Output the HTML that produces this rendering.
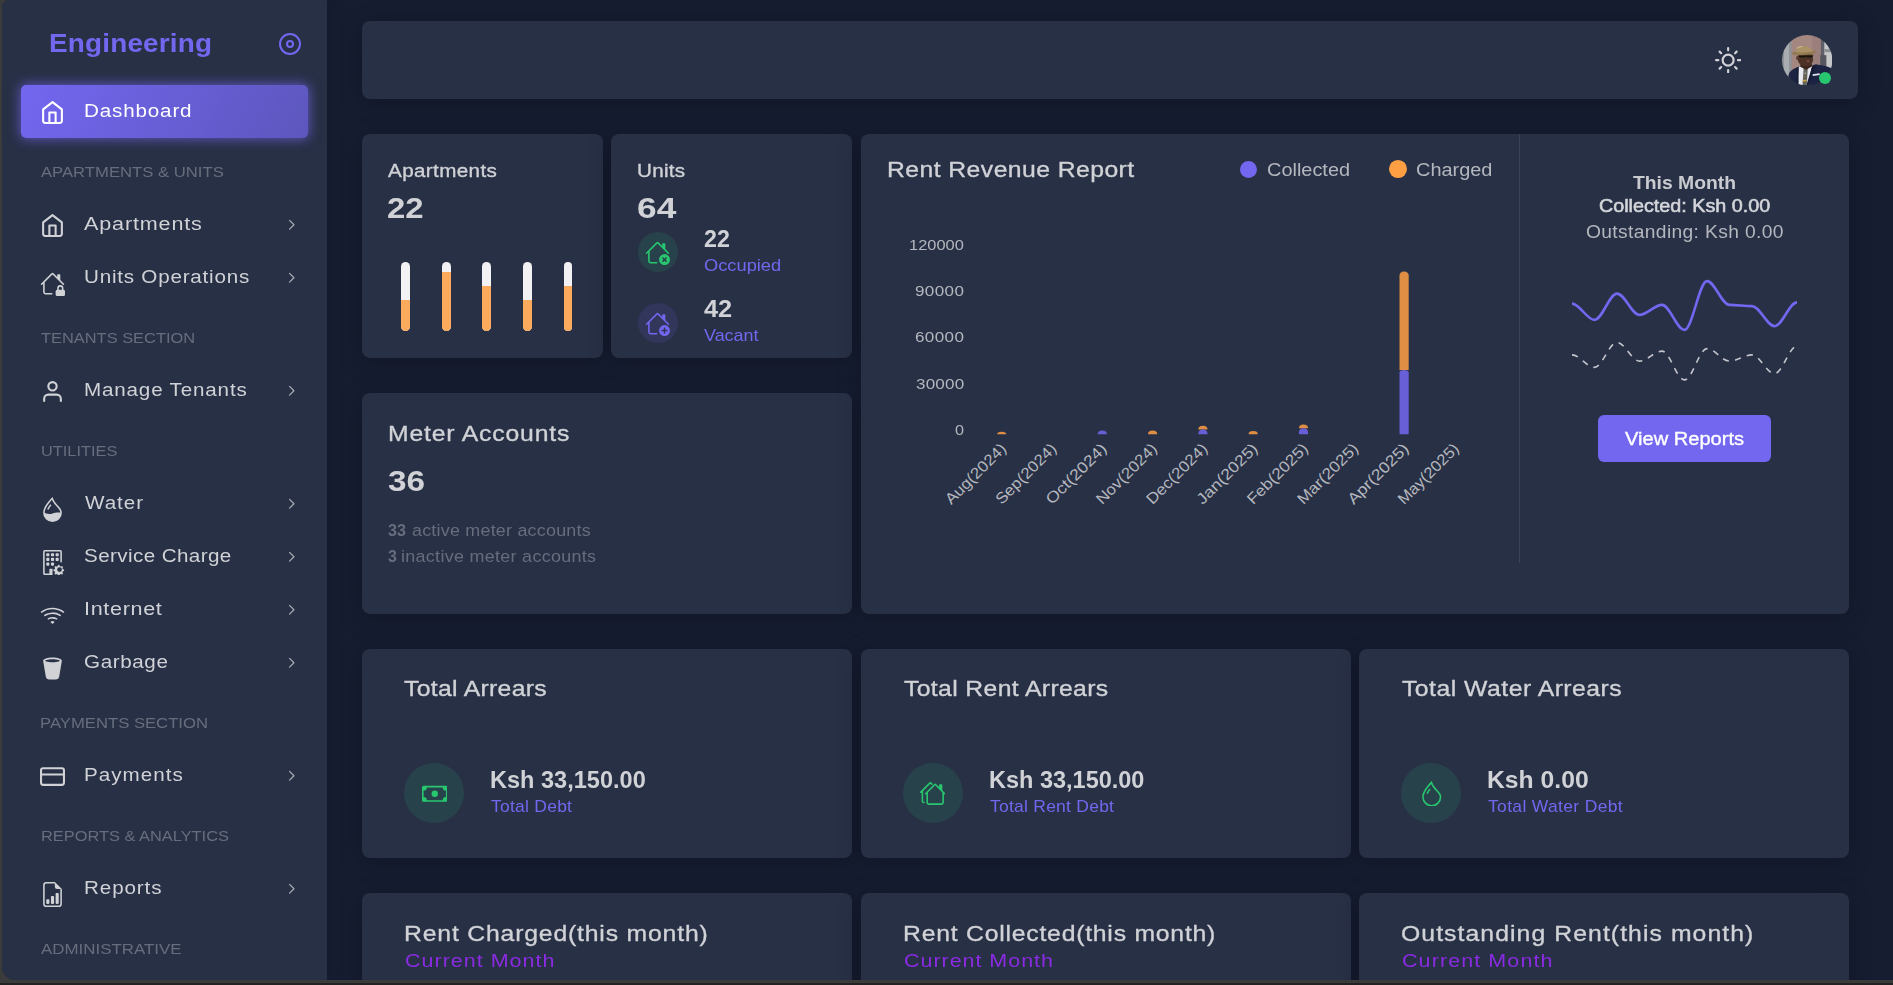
<!DOCTYPE html>
<html lang="en">
<head>
<meta charset="utf-8">
<title>Engineering - Dashboard</title>
<style>
*{box-sizing:border-box;margin:0;padding:0}
html,body{width:1893px;height:985px;overflow:hidden;background:#3b3b3b}
body{font-family:"Liberation Sans",sans-serif;color:#d0d2d6;position:relative}
.frame-bottom{position:absolute;left:0;top:983px;width:1893px;height:2px;background:#222}
.app{position:absolute;left:2px;top:0;width:1891px;height:980px;background:linear-gradient(90deg,#283046 0,#283046 40px,#161d31 41px);overflow:hidden;border-radius:7px 0 0 13px}
.abs{position:absolute}
/* ---------- sidebar ---------- */
.sidebar{position:absolute;left:0;top:0;width:325px;height:980px;background:#283046;border-radius:7px 0 0 13px;box-shadow:0 0 15px 0 rgba(16,20,34,.35)}
.brand{position:absolute;left:46px;top:27px;font-size:25.4px;font-weight:700;color:#7367f0;line-height:32px;white-space:nowrap}
.toggle{position:absolute;left:276px;top:32px;width:24px;height:24px}
.nav-item{position:absolute;left:19px;width:287px;height:53px;border-radius:5px;color:#d0d2d6;font-size:18.75px;white-space:nowrap}
.nav-item.active{background:linear-gradient(118deg,#7367f0,rgba(115,103,240,.7));box-shadow:0 0 12px 1px rgba(115,103,240,.7);color:#fff}
.nav-item .ic{position:absolute;left:18.7px;top:15px;width:25px;height:25px}
.nav-item .ic.bi{top:20px;fill:currentColor}
.nav-item .tx{position:absolute;left:63px;top:12px;line-height:27px;display:block}
.nav-item .chev{position:absolute;left:262.1px;top:17.9px;width:17.5px;height:17.5px;stroke-width:1.7;color:#a9acb3}
.nav-head{position:absolute;left:39px;font-size:15.4px;color:#676d7d;text-transform:uppercase;line-height:24px;white-space:nowrap}
svg.f{fill:none;stroke:currentColor;stroke-width:2;stroke-linecap:round;stroke-linejoin:round}
/* ---------- main ---------- */
.navbar{position:absolute;left:360px;top:21px;width:1496px;height:78px;background:#283046;border-radius:8px;box-shadow:0 4px 24px 0 rgba(0,0,0,.24)}
.card{position:absolute;background:#283046;border-radius:8px;box-shadow:0 4px 24px 0 rgba(0,0,0,.24)}
.t{position:absolute;white-space:nowrap}
.pg{position:absolute;left:-2px;top:0;width:1893px;height:985px}
.vbar{position:absolute;border-radius:5px;background:#f2f2f4;overflow:hidden}
.vbar i{position:absolute;left:0;right:0;bottom:0;background:#fcaa5c}
/*FIT-START*/
#brand{letter-spacing:0.152px;margin-left:0.60px;transform:scaleX(1.1000);transform-origin:0 50%}
#n0{letter-spacing:0.758px;margin-left:-0.20px;transform:scaleX(1.1000);transform-origin:0 50%}
#h1{letter-spacing:0.000px;margin-left:-0.20px;transform:scaleX(1.0832);transform-origin:0 50%}
#n1{letter-spacing:0.732px;margin-left:0.20px;transform:scaleX(1.1500);transform-origin:0 50%}
#n2{letter-spacing:0.703px;margin-left:-0.40px;transform:scaleX(1.1000);transform-origin:0 50%}
#h2{letter-spacing:0.000px;margin-left:-0.20px;transform:scaleX(1.0663);transform-origin:0 50%}
#n3{letter-spacing:0.742px;margin-left:-0.40px;transform:scaleX(1.1000);transform-origin:0 50%}
#h3{letter-spacing:0.000px;margin-left:-0.26px;transform:scaleX(1.0628);transform-origin:0 50%}
#n4{letter-spacing:0.870px;margin-left:0.70px;transform:scaleX(1.1000);transform-origin:0 50%}
#n5{letter-spacing:0.358px;margin-left:0.20px;transform:scaleX(1.1000);transform-origin:0 50%}
#n6{letter-spacing:0.586px;margin-left:-0.45px;transform:scaleX(1.1500);transform-origin:0 50%}
#n7{letter-spacing:0.546px;margin-left:0.20px;transform:scaleX(1.1000);transform-origin:0 50%}
#h4{letter-spacing:0.000px;margin-left:-0.58px;transform:scaleX(1.0834);transform-origin:0 50%}
#n8{letter-spacing:0.923px;margin-left:-0.30px;transform:scaleX(1.1000);transform-origin:0 50%}
#h5{letter-spacing:0.000px;margin-left:-0.46px;transform:scaleX(1.0650);transform-origin:0 50%}
#h6{letter-spacing:0.000px;margin-left:0.00px;transform:scaleX(1.0978);transform-origin:0 50%}
#n9{letter-spacing:0.802px;margin-left:-0.30px;transform:scaleX(1.1000);transform-origin:0 50%}
#c1a{letter-spacing:0.338px;margin-left:0.01px;transform:scaleX(1.1000);transform-origin:0 50%}
#c1b{letter-spacing:0.000px;margin-left:-1.09px;transform:scaleX(1.0983);transform-origin:0 50%}
#c2a{letter-spacing:0.232px;margin-left:-1.09px;transform:scaleX(1.1000);transform-origin:0 50%}
#c2b{letter-spacing:0.000px;margin-left:-1.17px;transform:scaleX(1.1779);transform-origin:0 50%}
#c2c{letter-spacing:0.000px;margin-left:0.01px;transform:scaleX(0.9920);transform-origin:0 50%}
#c2d{letter-spacing:0.000px;margin-left:0.01px;transform:scaleX(1.0748);transform-origin:0 50%}
#c2e{letter-spacing:0.000px;margin-left:0.01px;transform:scaleX(1.0843);transform-origin:0 50%}
#c2f{letter-spacing:0.000px;margin-left:0.01px;transform:scaleX(1.0550);transform-origin:0 50%}
#c3a{letter-spacing:0.750px;margin-left:-1.09px;transform:scaleX(1.1000);transform-origin:0 50%}
#c3b{letter-spacing:0.000px;margin-left:0.01px;transform:scaleX(1.1106);transform-origin:0 50%}
#c3c1{letter-spacing:0.000px;margin-left:0.01px;transform:scaleX(0.9914);transform-origin:0 50%}
#c3c2{letter-spacing:0.203px;margin-left:0.00px;transform:scaleX(1.1000);transform-origin:0 50%}
#c3d1{letter-spacing:0.000px;margin-left:0.01px;transform:scaleX(0.9778);transform-origin:0 50%}
#c3d2{letter-spacing:0.282px;margin-left:-1.09px;transform:scaleX(1.1000);transform-origin:0 50%}
#r1{letter-spacing:0.393px;margin-left:-1.09px;transform:scaleX(1.1000);transform-origin:0 50%}
#r2{letter-spacing:0.000px;margin-left:0.00px;transform:scaleX(1.0625);transform-origin:0 50%}
#r3{letter-spacing:0.000px;margin-left:0.00px;transform:scaleX(1.0630);transform-origin:0 50%}
#y0{letter-spacing:0.000px;margin-left:-1.05px;transform:scaleX(1.0587);transform-origin:0 50%}
#y1{letter-spacing:0.334px;margin-left:0.00px;transform:scaleX(1.1000);transform-origin:0 50%}
#y2{letter-spacing:0.334px;margin-left:0.00px;transform:scaleX(1.1000);transform-origin:0 50%}
#y3{letter-spacing:0.175px;margin-left:0.01px;transform:scaleX(1.1000);transform-origin:0 50%}
#y4{letter-spacing:0.000px;margin-left:0.01px;transform:scaleX(1.0444);transform-origin:0 50%}
#p1{letter-spacing:0.000px;margin-left:0.01px;transform:scaleX(1.0739);transform-origin:0 50%}
#p2{letter-spacing:0.000px;margin-left:0.00px;transform:scaleX(1.0962);transform-origin:0 50%}
#p3{letter-spacing:0.314px;margin-left:0.01px;transform:scaleX(1.1000);transform-origin:0 50%}
#p4{letter-spacing:0.000px;margin-left:0.01px;transform:scaleX(1.0714);transform-origin:0 50%}
#a1{letter-spacing:0.286px;margin-left:0.01px;transform:scaleX(1.1000);transform-origin:0 50%}
#a2{letter-spacing:0.000px;margin-left:-1.02px;transform:scaleX(1.0151);transform-origin:0 50%}
#a3{letter-spacing:0.228px;margin-left:0.00px;transform:scaleX(1.1000);transform-origin:0 50%}
#b1{letter-spacing:0.328px;margin-left:0.00px;transform:scaleX(1.1000);transform-origin:0 50%}
#b2{letter-spacing:0.000px;margin-left:-1.01px;transform:scaleX(1.0132);transform-origin:0 50%}
#b3{letter-spacing:0.226px;margin-left:0.00px;transform:scaleX(1.1000);transform-origin:0 50%}
#w1{letter-spacing:0.445px;margin-left:0.01px;transform:scaleX(1.1000);transform-origin:0 50%}
#w2{letter-spacing:0.000px;margin-left:-1.06px;transform:scaleX(1.0655);transform-origin:0 50%}
#w3{letter-spacing:0.311px;margin-left:0.01px;transform:scaleX(1.1000);transform-origin:0 50%}
#d1{letter-spacing:0.750px;margin-left:-1.09px;transform:scaleX(1.1000);transform-origin:0 50%}
#d2{letter-spacing:0.869px;margin-left:0.01px;transform:scaleX(1.1500);transform-origin:0 50%}
#e1{letter-spacing:0.703px;margin-left:-1.10px;transform:scaleX(1.1000);transform-origin:0 50%}
#e2{letter-spacing:0.840px;margin-left:0.00px;transform:scaleX(1.1500);transform-origin:0 50%}
#f1{letter-spacing:0.978px;margin-left:-1.09px;transform:scaleX(1.1000);transform-origin:0 50%}
#f2{letter-spacing:0.949px;margin-left:0.01px;transform:scaleX(1.1500);transform-origin:0 50%}
/*FIT-END*/
</style>
</head>
<body>
<div class="frame-bottom"></div>
<div class="app">

<!-- SIDEBAR -->
<div class="sidebar">
  <div class="brand" id="brand">Engineering</div>
  <svg class="toggle f" viewBox="0 0 24 24" style="color:#7367f0"><circle cx="12" cy="12" r="10"/><circle cx="12" cy="12" r="3"/></svg>

  <div class="nav-item active" style="top:85px">
    <svg class="ic f" viewBox="0 0 24 24"><path d="M3 9l9-7 9 7v11a2 2 0 0 1-2 2H5a2 2 0 0 1-2-2z"/><polyline points="9 22 9 12 15 12 15 22"/></svg>
    <span class="tx" id="n0">Dashboard</span>
  </div>
  <div class="nav-head" id="h1" style="top:159.8px">Apartments &amp; Units</div>
  <div class="nav-item" style="top:198.1px">
    <svg class="ic f" viewBox="0 0 24 24"><path d="M3 9l9-7 9 7v11a2 2 0 0 1-2 2H5a2 2 0 0 1-2-2z"/><polyline points="9 22 9 12 15 12 15 22"/></svg>
    <span class="tx" id="n1">Apartments</span>
    <svg class="chev f" viewBox="0 0 24 24"><polyline points="9 18 15 12 9 6"/></svg>
  </div>
  <div class="nav-item" style="top:250.9px">
    <svg class="ic bi" viewBox="0 0 16 16"><path d="M7.293 1.5a1 1 0 0 1 1.414 0L11 3.793V2.5a.5.5 0 0 1 .5-.5h1a.5.5 0 0 1 .5.5v3.293l2.354 2.353a.5.5 0 0 1-.708.708L8 2.207l-5 5V13.5a.5.5 0 0 0 .5.5h4a.5.5 0 0 1 0 1h-4A1.5 1.5 0 0 1 2 13.5V8.207l-.646.647a.5.5 0 1 1-.708-.708L7.293 1.5Z"/><path d="M10 13a1 1 0 0 1 1-1v-1a2 2 0 0 1 4 0v1a1 1 0 0 1 1 1v2a1 1 0 0 1-1 1h-4a1 1 0 0 1-1-1v-2Zm3-3a1 1 0 0 0-1 1v1h2v-1a1 1 0 0 0-1-1Z"/></svg>
    <span class="tx" id="n2">Units Operations</span>
    <svg class="chev f" viewBox="0 0 24 24"><polyline points="9 18 15 12 9 6"/></svg>
  </div>
  <div class="nav-head" id="h2" style="top:325.8px">Tenants Section</div>
  <div class="nav-item" style="top:364.1px">
    <svg class="ic f" viewBox="0 0 24 24"><path d="M20 21v-2a4 4 0 0 0-4-4H8a4 4 0 0 0-4 4v2"/><circle cx="12" cy="7" r="4"/></svg>
    <span class="tx" id="n3">Manage Tenants</span>
    <svg class="chev f" viewBox="0 0 24 24"><polyline points="9 18 15 12 9 6"/></svg>
  </div>
  <div class="nav-head" id="h3" style="top:439.0px">Utilities</div>
  <div class="nav-item" style="top:477.3px">
    <svg class="ic bi" viewBox="0 0 16 16"><path fill-rule="evenodd" d="M7.21.8C7.69.295 8 0 8 0c.109.363.234.708.371 1.038.812 1.946 2.073 3.35 3.197 4.6C12.878 7.096 14 8.345 14 10a6 6 0 0 1-12 0C2 6.668 5.58 2.517 7.21.8zm.413 1.021A31.25 31.25 0 0 0 5.794 3.99c-.726.95-1.436 2.008-1.96 3.07C3.304 8.133 3 9.138 3 10c0 0 2.5 1.5 5 .5s5-.5 5-.5c0-1.201-.796-2.157-2.181-3.7l-.03-.032C9.75 5.11 8.5 3.72 7.623 1.82z"/><path fill-rule="evenodd" d="M4.553 7.776c.82-1.641 1.717-2.753 2.093-3.13l.708.708c-.29.29-1.128 1.311-1.907 2.87l-.894-.448z"/></svg>
    <span class="tx" id="n4">Water</span>
    <svg class="chev f" viewBox="0 0 24 24"><polyline points="9 18 15 12 9 6"/></svg>
  </div>
  <div class="nav-item" style="top:530.1px">
    <svg class="ic bi" viewBox="0 0 16 16"><path d="M2 1a1 1 0 0 1 1-1h10a1 1 0 0 1 1 1v6.5a.5.5 0 0 1-1 0V1H3v14h3v-2.5a.5.5 0 0 1 .5-.5H8v4H3a1 1 0 0 1-1-1V1Z"/><path d="M4.500 2a.5.5 0 0 0-.5.5v1a.5.5 0 0 0 .5.5h1a.5.5 0 0 0 .5-.5v-1a.5.5 0 0 0-.5-.5h-1Zm2.500.5a.5.5 0 0 1 .5-.5h1a.5.5 0 0 1 .5.5v1a.5.5 0 0 1-.5.5h-1a.5.5 0 0 1-.5-.5v-1Zm3.500-.5a.5.5 0 0 0-.5.5v1a.5.5 0 0 0 .5.5h1a.5.5 0 0 0 .5-.5v-1a.5.5 0 0 0-.5-.5h-1ZM4 5.500a.5.5 0 0 1 .5-.5h1a.5.5 0 0 1 .5.5v1a.5.5 0 0 1-.5.5h-1a.5.5 0 0 1-.5-.5v-1ZM7.500 5a.5.5 0 0 0-.5.5v1a.5.5 0 0 0 .5.5h1a.5.5 0 0 0 .5-.5v-1a.5.5 0 0 0-.5-.5h-1Zm2.500.5a.5.5 0 0 1 .5-.5h1a.5.5 0 0 1 .5.5v1a.5.5 0 0 1-.5.5h-1a.5.5 0 0 1-.5-.5v-1ZM4.500 8a.5.5 0 0 0-.5.5v1a.5.5 0 0 0 .5.5h1a.5.5 0 0 0 .5-.5v-1a.5.5 0 0 0-.5-.5h-1Zm2.500.5a.5.5 0 0 1 .5-.5h1a.5.5 0 0 1 .5.5v1a.5.5 0 0 1-.5.5h-1a.5.5 0 0 1-.5-.5v-1Zm4.386 1.460c.18-.613 1.048-.613 1.229 0l.043.148a.64.64 0 0 0 .921.382l.136-.074c.561-.306 1.175.308.87.869l-.075.136a.64.64 0 0 0 .382.92l.149.045c.612.18.612 1.048 0 1.229l-.15.043a.64.64 0 0 0-.38.921l.074.136c.305.561-.309 1.175-.87.87l-.136-.075a.64.64 0 0 0-.92.382l-.045.149c-.18.612-1.048.612-1.229 0l-.043-.15a.64.64 0 0 0-.921-.38l-.136.074c-.561.305-1.175-.309-.87-.87l.075-.136a.64.64 0 0 0-.382-.92l-.148-.045c-.613-.18-.613-1.048 0-1.229l.148-.043a.64.64 0 0 0 .382-.921l-.074-.136c-.306-.561.308-1.175.869-.87l.136.075a.64.64 0 0 0 .92-.382l.045-.148ZM14 12.500a1.500 1.500 0 1 0-3 0 1.500 1.500 0 0 0 3 0Z"/></svg>
    <span class="tx" id="n5">Service Charge</span>
    <svg class="chev f" viewBox="0 0 24 24"><polyline points="9 18 15 12 9 6"/></svg>
  </div>
  <div class="nav-item" style="top:582.9px">
    <svg class="ic bi" viewBox="0 0 16 16"><path d="M15.384 6.115a.485.485 0 0 0-.047-.736A12.444 12.444 0 0 0 8 3C5.259 3 2.723 3.882.663 5.379a.485.485 0 0 0-.048.736.518.518 0 0 0 .668.050A11.448 11.448 0 0 1 8 4c2.507 0 4.827.802 6.716 2.164.205.148.49.130.668-.049z"/><path d="M13.229 8.271a.482.482 0 0 0-.063-.745A9.455 9.455 0 0 0 8 6c-1.905 0-3.680.560-5.166 1.526a.48.48 0 0 0-.063.745.525.525 0 0 0 .652.065A8.460 8.460 0 0 1 8 7a8.460 8.460 0 0 1 4.576 1.336c.206.132.48.108.653-.065zm-2.183 2.183c.226-.226.185-.605-.1-.75A6.473 6.473 0 0 0 8 9c-1.060 0-2.062.254-2.946.704-.285.145-.326.524-.1.75l.015.015c.16.16.407.19.611.09A5.478 5.478 0 0 1 8 10c.868 0 1.690.201 2.420.560.203.1.45.07.61-.091l.016-.015zM9.060 12.440c.196-.196.198-.52-.04-.66A1.990 1.990 0 0 0 8 11.500a1.990 1.990 0 0 0-1.020.28c-.238.14-.236.464-.04.66l.706.706a.5.5 0 0 0 .707 0l.707-.707z"/></svg>
    <span class="tx" id="n6">Internet</span>
    <svg class="chev f" viewBox="0 0 24 24"><polyline points="9 18 15 12 9 6"/></svg>
  </div>
  <div class="nav-item" style="top:635.7px">
    <svg class="ic bi" viewBox="0 0 16 16"><path d="M2.037 3.225A.703.703 0 0 1 2 3c0-1.105 2.686-2 6-2s6 .895 6 2a.702.702 0 0 1-.037.225l-1.684 10.104A2 2 0 0 1 10.305 15H5.694a2 2 0 0 1-1.973-1.671L2.037 3.225zm9.890-.69C10.966 2.214 9.578 2 8 2c-1.580 0-2.968.215-3.926.534-.477.16-.795.327-.975.466.18.14.498.307.975.466C5.032 3.786 6.420 4 8 4s2.967-.215 3.926-.534c.477-.16.795-.327.975-.466-.18-.14-.498-.307-.975-.466z"/></svg>
    <span class="tx" id="n7">Garbage</span>
    <svg class="chev f" viewBox="0 0 24 24"><polyline points="9 18 15 12 9 6"/></svg>
  </div>
  <div class="nav-head" id="h4" style="top:710.6px">Payments Section</div>
  <div class="nav-item" style="top:748.9px">
    <svg class="ic f" viewBox="0 0 24 24"><rect x="1" y="4" width="22" height="16" rx="2" ry="2"/><line x1="1" y1="10" x2="23" y2="10"/></svg>
    <span class="tx" id="n8">Payments</span>
    <svg class="chev f" viewBox="0 0 24 24"><polyline points="9 18 15 12 9 6"/></svg>
  </div>
  <div class="nav-head" id="h5" style="top:823.8px">Reports &amp; Analytics</div>
  <div class="nav-item" style="top:862.1px">
    <svg class="ic bi" viewBox="0 0 16 16"><path d="M10 13.500a.5.5 0 0 0 .5.5h1a.5.5 0 0 0 .5-.5v-6a.5.5 0 0 0-.5-.5h-1a.5.5 0 0 0-.5.5v6zm-2.500.5a.5.5 0 0 1-.5-.5v-4a.5.5 0 0 1 .5-.5h1a.5.5 0 0 1 .5.5v4a.5.5 0 0 1-.5.5h-1zm-3 0a.5.5 0 0 1-.5-.5v-2a.5.5 0 0 1 .5-.5h1a.5.5 0 0 1 .5.5v2a.5.5 0 0 1-.5.5h-1z"/><path d="M14 14V4.500L9.500 0H4a2 2 0 0 0-2 2v12a2 2 0 0 0 2 2h8a2 2 0 0 0 2-2zM9.500 3A1.500 1.500 0 0 0 11 4.500h2V14a1 1 0 0 1-1 1H4a1 1 0 0 1-1-1V2a1 1 0 0 1 1-1h5.500v2z"/></svg>
    <span class="tx" id="n9">Reports</span>
    <svg class="chev f" viewBox="0 0 24 24"><polyline points="9 18 15 12 9 6"/></svg>
  </div>
  <div class="nav-head" id="h6" style="top:937.0px">Administrative</div>
</div>

<!-- MAIN-START -->
<div class="pg">
<div class="card" style="left:361.8px;top:134px;width:241.3px;height:223.8px"></div>
<div class="card" style="left:611.1px;top:134px;width:241.2px;height:223.8px"></div>
<div class="card" style="left:362px;top:393px;width:490.3px;height:220.5px"></div>
<div class="card" style="left:861px;top:134px;width:988.0px;height:479.5px"></div>
<div class="card" style="left:362px;top:649px;width:490.3px;height:208.6px"></div>
<div class="card" style="left:861px;top:649px;width:489.6px;height:208.6px"></div>
<div class="card" style="left:1359px;top:649px;width:490.0px;height:208.6px"></div>
<div class="card" style="left:362px;top:893px;width:490.3px;height:107.0px"></div>
<div class="card" style="left:861px;top:893px;width:489.6px;height:107.0px"></div>
<div class="card" style="left:1359px;top:893px;width:490.0px;height:107.0px"></div>
<div class="t" id="c1a" style="left:388.4px;top:162.33px;font-size:18.75px;line-height:18.75px;color:#d0d2d6;-webkit-text-stroke:0.35px #d0d2d6;">Apartments</div>
<div class="t" id="c1b" style="left:388.4px;top:192.50px;font-size:30px;line-height:30px;color:#d0d2d6;font-weight:700;">22</div>
<div class="vbar" style="left:401.3px;top:261.5px;width:8.6px;height:69.4px"><i style="top:38.2px"></i></div>
<div class="vbar" style="left:442.0px;top:261.5px;width:8.6px;height:69.4px"><i style="top:10.4px"></i></div>
<div class="vbar" style="left:482.4px;top:261.5px;width:8.6px;height:69.4px"><i style="top:24.3px"></i></div>
<div class="vbar" style="left:523.1px;top:261.5px;width:8.6px;height:69.4px"><i style="top:38.2px"></i></div>
<div class="vbar" style="left:563.8px;top:261.5px;width:8.6px;height:69.4px"><i style="top:24.3px"></i></div>
<div class="t" id="c2a" style="left:638.4px;top:162.33px;font-size:18.75px;line-height:18.75px;color:#d0d2d6;-webkit-text-stroke:0.35px #d0d2d6;">Units</div>
<div class="t" id="c2b" style="left:638.4px;top:192.50px;font-size:30px;line-height:30px;color:#d0d2d6;font-weight:700;">64</div>
<div class="abs" style="left:637.9px;top:231.9px;width:40.2px;height:40.2px;border-radius:50%;background:#28424b"></div>
<svg class="abs" style="left:645.1px;top:240.1px;color:#28c76f" width="25" height="25" viewBox="0 0 16 16" fill="currentColor"><path fill-rule="evenodd" d="M7.293 1.5a1 1 0 0 1 1.414 0L11 3.793V2.5a.5.5 0 0 1 .5-.5h1a.5.5 0 0 1 .5.5v3.293l2.354 2.353a.5.5 0 0 1-.708.708L8 2.207l-5 5V13.5a.5.5 0 0 0 .5.5h4a.5.5 0 0 1 0 1h-4A1.5 1.5 0 0 1 2 13.5V8.207l-.646.647a.5.5 0 1 1-.708-.708L7.293 1.5Z"/><path fill-rule="evenodd" d="M12.5 16a3.5 3.5 0 1 0 0-7 3.5 3.5 0 0 0 0 7Zm-.646-4.854.646.647.646-.647a.5.5 0 0 1 .708.708l-.647.646.647.646a.5.5 0 0 1-.708.708l-.646-.647-.646.647a.5.5 0 0 1-.708-.708l.647-.646-.647-.646a.5.5 0 0 1 .708-.708Z"/></svg>
<div class="t" id="c2c" style="left:704.2px;top:228.09px;font-size:23.4px;line-height:23.4px;color:#d0d2d6;font-weight:700;">22</div>
<div class="t" id="c2d" style="left:704.2px;top:257.11px;font-size:17px;line-height:17px;color:#7367f0;">Occupied</div>
<div class="abs" style="left:637.9px;top:302.9px;width:40.2px;height:40.2px;border-radius:50%;background:#31365a"></div>
<svg class="abs" style="left:645.1px;top:310.7px;color:#7367f0" width="25" height="25" viewBox="0 0 16 16" fill="currentColor"><path fill-rule="evenodd" d="M7.293 1.5a1 1 0 0 1 1.414 0L11 3.793V2.5a.5.5 0 0 1 .5-.5h1a.5.5 0 0 1 .5.5v3.293l2.354 2.353a.5.5 0 0 1-.708.708L8 2.207l-5 5V13.5a.5.5 0 0 0 .5.5h4a.5.5 0 0 1 0 1h-4A1.5 1.5 0 0 1 2 13.5V8.207l-.646.647a.5.5 0 1 1-.708-.708L7.293 1.5Z"/><path fill-rule="evenodd" d="M16 12.5a3.5 3.5 0 1 1-7 0 3.5 3.5 0 0 1 7 0Zm-3.5-2a.5.5 0 0 0-.5.5v1h-1a.5.5 0 0 0 0 1h1v1a.5.5 0 1 0 1 0v-1h1a.5.5 0 1 0 0-1h-1v-1a.5.5 0 0 0-.5-.5Z"/></svg>
<div class="t" id="c2e" style="left:704.2px;top:298.09px;font-size:23.4px;line-height:23.4px;color:#d0d2d6;font-weight:700;">42</div>
<div class="t" id="c2f" style="left:704.2px;top:327.01px;font-size:17px;line-height:17px;color:#7367f0;">Vacant</div>
<div class="t" id="c3a" style="left:389.1px;top:423.25px;font-size:22.5px;line-height:22.5px;color:#d0d2d6;-webkit-text-stroke:0.35px #d0d2d6;">Meter Accounts</div>
<div class="t" id="c3b" style="left:388.4px;top:466.41px;font-size:30px;line-height:30px;color:#d0d2d6;font-weight:700;">36</div>
<div class="t" id="c3c1" style="left:388.4px;top:522.20px;font-size:16.3px;line-height:16.3px;color:#676d7d;font-weight:700;">33</div>
<div class="t" id="c3c2" style="left:411.5px;top:522.20px;font-size:16.3px;line-height:16.3px;color:#676d7d;">active meter accounts</div>
<div class="t" id="c3d1" style="left:388.4px;top:548.40px;font-size:16.3px;line-height:16.3px;color:#676d7d;font-weight:700;">3</div>
<div class="t" id="c3d2" style="left:402.2px;top:548.40px;font-size:16.3px;line-height:16.3px;color:#676d7d;">inactive meter accounts</div>
<div class="t" id="r1" style="left:887.9px;top:158.75px;font-size:22.5px;line-height:22.5px;color:#d0d2d6;-webkit-text-stroke:0.35px #d0d2d6;">Rent Revenue Report</div>
<div class="abs" style="left:1239.8px;top:160.6px;width:17.4px;height:17.4px;border-radius:50%;background:#7367f0"></div>
<div class="t" id="r2" style="left:1266.5px;top:161.03px;font-size:18.75px;line-height:18.75px;color:#b4b7bd;">Collected</div>
<div class="abs" style="left:1389.1px;top:160.4px;width:17.8px;height:17.8px;border-radius:50%;background:#ff9f43"></div>
<div class="t" id="r3" style="left:1416.0px;top:161.03px;font-size:18.75px;line-height:18.75px;color:#b4b7bd;">Charged</div>
<div class="abs" style="left:1519px;top:134px;width:1px;height:429px;background:#3b4253"></div>
<div class="t" id="y0" style="left:910.2px;top:236.78px;font-size:15.5px;line-height:15.5px;color:#b4b7bd;">120000</div>
<div class="t" id="y1" style="left:915.0px;top:283.08px;font-size:15.5px;line-height:15.5px;color:#b4b7bd;">90000</div>
<div class="t" id="y2" style="left:915.0px;top:329.38px;font-size:15.5px;line-height:15.5px;color:#b4b7bd;">60000</div>
<div class="t" id="y3" style="left:915.7px;top:375.68px;font-size:15.5px;line-height:15.5px;color:#b4b7bd;">30000</div>
<div class="t" id="y4" style="left:954.9px;top:421.98px;font-size:15.5px;line-height:15.5px;color:#b4b7bd;">0</div>
<svg class="abs" style="left:0;top:0" width="1893" height="985" viewBox="0 0 1893 985">
<path fill="#df8e43" d="M997.1 434.2V434.2Q997.1 431.7 1001.7 431.7Q1006.3 431.7 1006.3 434.2V434.2Z"/>
<path fill="#685fd6" d="M1097.7 434.2V434.2Q1097.7 430.5 1102.3 430.5Q1106.9 430.5 1106.9 434.2V434.2Z"/>
<path fill="#df8e43" d="M1148.0 434.2V434.2Q1148.0 430.5 1152.6 430.5Q1157.2 430.5 1157.2 434.2V434.2Z"/>
<path fill="#df8e43" d="M1198.3 429.5V429.5Q1198.3 425.8 1202.9 425.8Q1207.5 425.8 1207.5 429.5V429.5Z"/>
<path fill="#685fd6" d="M1198.3 434.2V434.1Q1198.3 429.5 1202.9 429.5Q1207.5 429.5 1207.5 434.1V434.2Z"/>
<path fill="#df8e43" d="M1248.6 434.2V434.2Q1248.6 430.9 1253.2 430.9Q1257.8 430.9 1257.8 434.2V434.2Z"/>
<path fill="#df8e43" d="M1298.9 428.3V428.3Q1298.9 424.4 1303.5 424.4Q1308.1 424.4 1308.1 428.3V428.3Z"/>
<path fill="#685fd6" d="M1298.9 434.2V432.9Q1298.9 428.3 1303.5 428.3Q1308.1 428.3 1308.1 432.9V434.2Z"/>
<path fill="#df8e43" d="M1399.5 370.0V276.2Q1399.5 271.6 1404.1 271.6Q1408.7 271.6 1408.7 276.2V370.0Z"/>
<path fill="#685fd6" d="M1399.5 434.2V372.5Q1399.5 370.0 1404.1 370.0Q1408.7 370.0 1408.7 372.5V434.2Z"/>
<text x="1007.2" y="449.5" text-anchor="end" transform="rotate(-45 1007.2 449.5)" font-size="15.5" fill="#b4b7bd" textLength="79" lengthAdjust="spacingAndGlyphs">Aug(2024)</text>
<text x="1057.5" y="449.5" text-anchor="end" transform="rotate(-45 1057.5 449.5)" font-size="15.5" fill="#b4b7bd" textLength="79" lengthAdjust="spacingAndGlyphs">Sep(2024)</text>
<text x="1107.8" y="449.5" text-anchor="end" transform="rotate(-45 1107.8 449.5)" font-size="15.5" fill="#b4b7bd" textLength="79" lengthAdjust="spacingAndGlyphs">Oct(2024)</text>
<text x="1158.1" y="449.5" text-anchor="end" transform="rotate(-45 1158.1 449.5)" font-size="15.5" fill="#b4b7bd" textLength="79" lengthAdjust="spacingAndGlyphs">Nov(2024)</text>
<text x="1208.4" y="449.5" text-anchor="end" transform="rotate(-45 1208.4 449.5)" font-size="15.5" fill="#b4b7bd" textLength="79" lengthAdjust="spacingAndGlyphs">Dec(2024)</text>
<text x="1258.7" y="449.5" text-anchor="end" transform="rotate(-45 1258.7 449.5)" font-size="15.5" fill="#b4b7bd" textLength="79" lengthAdjust="spacingAndGlyphs">Jan(2025)</text>
<text x="1309.0" y="449.5" text-anchor="end" transform="rotate(-45 1309.0 449.5)" font-size="15.5" fill="#b4b7bd" textLength="79" lengthAdjust="spacingAndGlyphs">Feb(2025)</text>
<text x="1359.3" y="449.5" text-anchor="end" transform="rotate(-45 1359.3 449.5)" font-size="15.5" fill="#b4b7bd" textLength="79" lengthAdjust="spacingAndGlyphs">Mar(2025)</text>
<text x="1409.6" y="449.5" text-anchor="end" transform="rotate(-45 1409.6 449.5)" font-size="15.5" fill="#b4b7bd" textLength="79" lengthAdjust="spacingAndGlyphs">Apr(2025)</text>
<text x="1459.9" y="449.5" text-anchor="end" transform="rotate(-45 1459.9 449.5)" font-size="15.5" fill="#b4b7bd" textLength="79" lengthAdjust="spacingAndGlyphs">May(2025)</text>
<path d="M1572.0 303.6C1579.9 303.6 1586.6 319.9 1594.5 319.9C1602.4 319.9 1609.1 293.6 1617.0 293.6C1624.9 293.6 1631.6 314.9 1639.5 314.9C1647.4 314.9 1654.1 304.9 1662.0 304.9C1669.9 304.9 1676.6 329.9 1684.5 329.9C1692.4 329.9 1699.1 281.1 1707.0 281.1C1714.9 281.1 1721.6 304.9 1729.5 304.9C1737.4 304.9 1744.1 306.1 1752.0 306.1C1759.9 306.1 1766.6 326.1 1774.5 326.1C1782.4 326.1 1789.1 302.4 1797.0 302.4" fill="none" stroke="#7367f0" stroke-width="2.6" stroke-linecap="butt"/>
<path d="M1572.0 354.9C1579.9 354.9 1586.6 367.4 1594.5 367.4C1602.4 367.4 1609.1 342.4 1617.0 342.4C1624.9 342.4 1631.6 361.1 1639.5 361.1C1647.4 361.1 1654.1 351.1 1662.0 351.1C1669.9 351.1 1676.6 379.9 1684.5 379.9C1692.4 379.9 1699.1 348.6 1707.0 348.6C1714.9 348.6 1721.6 361.1 1729.5 361.1C1737.4 361.1 1744.1 354.9 1752.0 354.9C1759.9 354.9 1766.6 373.6 1774.5 373.6C1782.4 373.6 1789.1 346.1 1797.0 346.1" fill="none" stroke="#c4c4cc" stroke-width="1.6" stroke-dasharray="6.25" />
</svg>
<div class="t" id="p1" style="left:1633.2px;top:173.56px;font-size:18px;line-height:18px;color:#c9cbd0;font-weight:700;">This Month</div>
<div class="t" id="p2" style="left:1599.0px;top:196.56px;font-size:18px;line-height:18px;color:#d4d6da;-webkit-text-stroke:0.55px #d4d6da;">Collected: Ksh 0.00</div>
<div class="t" id="p3" style="left:1585.6px;top:223.99px;font-size:17.5px;line-height:17.5px;color:#b4b7bd;">Outstanding: Ksh 0.00</div>
<div class="abs" style="left:1597.9px;top:414.8px;width:173.3px;height:47.3px;border-radius:6px;background:#7367f0"></div>
<div class="t" id="p4" style="left:1625.1px;top:429.83px;font-size:18.75px;line-height:18.75px;color:#fff;-webkit-text-stroke:0.35px #fff;">View Reports</div>
<div class="t" id="a1" style="left:404.4px;top:677.75px;font-size:22.5px;line-height:22.5px;color:#d0d2d6;-webkit-text-stroke:0.35px #d0d2d6;">Total Arrears</div>
<div class="abs" style="left:403.9px;top:762.8px;width:60.4px;height:60.4px;border-radius:50%;background:#28424b"></div>
<svg class="abs" style="left:421.8px;top:780.6px;color:#28c76f" width="25.5" height="25.5" viewBox="0 0 16 16" fill="currentColor"><path fill-rule="evenodd" d="M8 10a2 2 0 1 0 0-4 2 2 0 0 0 0 4z"/><path fill-rule="evenodd" d="M0 4a1 1 0 0 1 1-1h14a1 1 0 0 1 1 1v8a1 1 0 0 1-1 1H1a1 1 0 0 1-1-1V4zm3 0a2 2 0 0 1-2 2v4a2 2 0 0 1 2 2h10a2 2 0 0 1 2-2V6a2 2 0 0 1-2-2H3z"/></svg>
<div class="t" id="a2" style="left:491.0px;top:768.76px;font-size:23.2px;line-height:23.2px;color:#d0d2d6;font-weight:700;">Ksh 33,150.00</div>
<div class="t" id="a3" style="left:491.0px;top:799.24px;font-size:15.9px;line-height:15.9px;color:#7367f0;">Total Debt</div>
<div class="t" id="b1" style="left:903.5px;top:677.85px;font-size:22.5px;line-height:22.5px;color:#d0d2d6;-webkit-text-stroke:0.35px #d0d2d6;">Total Rent Arrears</div>
<div class="abs" style="left:902.6px;top:762.8px;width:60.4px;height:60.4px;border-radius:50%;background:#28424b"></div>
<svg class="abs" style="left:919.6px;top:780.5px;color:#28c76f" width="25.5" height="25.5" viewBox="0 0 16 16" fill="currentColor"><path fill-rule="evenodd" d="M5.793 1a1 1 0 0 1 1.414 0l.647.646a.5.5 0 1 1-.708.708L6.5 1.707 2 6.207V12.5a.5.5 0 0 0 .5.5.5.5 0 0 1 0 1A1.5 1.5 0 0 1 1 12.5V7.207l-.146.147a.5.5 0 0 1-.708-.708L5.793 1Zm3 1a1 1 0 0 1 1.414 0L12 3.793V2.5a.5.5 0 0 1 .5-.5h1a.5.5 0 0 1 .5.5v3.293l1.854 1.853a.5.5 0 0 1-.708.708L15 8.207V13.5a1.5 1.5 0 0 1-1.5 1.5h-8A1.5 1.5 0 0 1 4 13.5V8.207l-.146.147a.5.5 0 1 1-.708-.708L8.793 2Zm.707.707L5 7.207V13.5a.5.5 0 0 0 .5.5h8a.5.5 0 0 0 .5-.5V7.207l-4.5-4.5Z"/></svg>
<div class="t" id="b2" style="left:989.8px;top:768.76px;font-size:23.2px;line-height:23.2px;color:#d0d2d6;font-weight:700;">Ksh 33,150.00</div>
<div class="t" id="b3" style="left:989.8px;top:799.24px;font-size:15.9px;line-height:15.9px;color:#7367f0;">Total Rent Debt</div>
<div class="t" id="w1" style="left:1401.6px;top:677.75px;font-size:22.5px;line-height:22.5px;color:#d0d2d6;-webkit-text-stroke:0.35px #d0d2d6;">Total Water Arrears</div>
<div class="abs" style="left:1400.8px;top:762.8px;width:60.4px;height:60.4px;border-radius:50%;background:#28424b"></div>
<svg class="abs" style="left:1418.8px;top:780.6px;color:#28c76f" width="25.5" height="25.5" viewBox="0 0 16 16" fill="currentColor"><path fill-rule="evenodd" d="M7.21.8C7.69.295 8 0 8 0c.109.363.234.708.371 1.038.812 1.946 2.073 3.35 3.197 4.6C12.878 7.096 14 8.345 14 10a6 6 0 0 1-12 0C2 6.668 5.58 2.517 7.21.8zm.413 1.021A31.25 31.25 0 0 0 5.794 3.99c-.726.95-1.436 2.008-1.96 3.07C3.304 8.133 3 9.138 3 10a5 5 0 0 0 10 0c0-1.201-.796-2.157-2.181-3.7l-.03-.032C9.75 5.11 8.5 3.72 7.623 1.82z"/><path fill-rule="evenodd" d="M4.553 7.776c.82-1.641 1.717-2.753 2.093-3.13l.708.708c-.29.29-1.128 1.311-1.907 2.87l-.894-.448z"/></svg>
<div class="t" id="w2" style="left:1488.4px;top:768.76px;font-size:23.2px;line-height:23.2px;color:#d0d2d6;font-weight:700;">Ksh 0.00</div>
<div class="t" id="w3" style="left:1488.4px;top:799.24px;font-size:15.9px;line-height:15.9px;color:#7367f0;">Total Water Debt</div>
<div class="t" id="d1" style="left:404.9px;top:922.75px;font-size:22.5px;line-height:22.5px;color:#d0d2d6;-webkit-text-stroke:0.35px #d0d2d6;">Rent Charged(this month)</div>
<div class="t" id="d2" style="left:404.9px;top:952.27px;font-size:18.7px;line-height:18.7px;color:#8a2be2;">Current Month</div>
<div class="t" id="e1" style="left:904.0px;top:922.75px;font-size:22.5px;line-height:22.5px;color:#d0d2d6;-webkit-text-stroke:0.35px #d0d2d6;">Rent Collected(this month)</div>
<div class="t" id="e2" style="left:904.0px;top:952.27px;font-size:18.7px;line-height:18.7px;color:#8a2be2;">Current Month</div>
<div class="t" id="f1" style="left:1401.6px;top:922.75px;font-size:22.5px;line-height:22.5px;color:#d0d2d6;-webkit-text-stroke:0.35px #d0d2d6;">Outstanding Rent(this month)</div>
<div class="t" id="f2" style="left:1401.6px;top:952.27px;font-size:18.7px;line-height:18.7px;color:#8a2be2;">Current Month</div>
</div>
<!-- MAIN-END -->

<!-- NAVBAR -->
<div class="navbar"></div>
<div class="pg">
  <svg class="abs f" style="left:1714.9px;top:46.8px;color:#d0d2d6" width="26.25" height="26.25" viewBox="0 0 24 24"><circle cx="12" cy="12" r="5"/><line x1="12" y1="1" x2="12" y2="3"/><line x1="12" y1="21" x2="12" y2="23"/><line x1="4.22" y1="4.22" x2="5.64" y2="5.64"/><line x1="18.36" y1="18.36" x2="19.78" y2="19.78"/><line x1="1" y1="12" x2="3" y2="12"/><line x1="21" y1="12" x2="23" y2="12"/><line x1="4.22" y1="19.78" x2="5.64" y2="18.36"/><line x1="18.36" y1="5.64" x2="19.78" y2="4.22"/></svg>
  <svg class="abs" style="left:1781.8px;top:34.6px" width="50.4" height="50.4" viewBox="0 0 50 50">
    <defs>
      <clipPath id="avc"><circle cx="25" cy="25" r="25"/></clipPath>
      <filter id="avb" x="-10%" y="-10%" width="120%" height="120%"><feGaussianBlur stdDeviation="0.55"/></filter>
    </defs>
    <g clip-path="url(#avc)"><g filter="url(#avb)">
      <rect x="-2" y="-2" width="54" height="54" fill="#a48781"/>
      <rect x="-2" y="-2" width="11.5" height="54" fill="#8f9397"/>
      <rect x="2" y="-2" width="5" height="54" fill="#a9adb0"/>
      <rect x="30" y="-2" width="9" height="40" fill="#9a7f7b"/>
      <rect x="38.6" y="-2" width="4" height="54" fill="#5f6169"/>
      <rect x="42" y="-2" width="10" height="54" fill="#c4c6c8"/>
      <rect x="42" y="14" width="10" height="3" fill="#8d9094"/>
      <rect x="38" y="20" width="6" height="12" fill="#54565e"/>
      <!-- suit -->
      <path d="M7 52V38c2-4 8-6 12-7.500l7 4 7-5.500c5 1 12 1.500 16 4l2 19z" fill="#1b2342"/>
      <path d="M7 38c-1 3-1.500 8-1.500 14h6z" fill="#252d4e"/>
      <!-- shirt -->
      <path d="M16.500 31.800l5.500-2.800 8.500 1-1.500 3.500L26.500 52H15z" fill="#e9eaf0"/>
      <!-- lapels -->
      <path d="M30.500 29.500l3 1.500-7.500 21h-2.500z" fill="#141a35"/>
      <path d="M16.500 31.800l-2 1 .3 19.200h1.600z" fill="#141a35"/>
      <!-- tie -->
      <path d="M21.500 32l3.200-.6.900 2-1 15.500-2.200 3-2-3z" fill="#64655c"/>
      <rect x="20.800" y="44.500" width="3.500" height="1.600" fill="#c9a23a"/>
      <circle cx="23" cy="38" r=".8" fill="#b9b0a0"/><circle cx="22.500" cy="41.500" r=".7" fill="#9a4a50"/>
      <!-- pocket square -->
      <path d="M30.300 38.900l7-1 .2 1.800-7 .9z" fill="#dfe3ee"/>
      <!-- neck + face -->
      <path d="M19 27h10l1 4-6 3.500-6-3z" fill="#3d261f"/>
      <ellipse cx="23.300" cy="24.300" rx="7.600" ry="6.800" fill="#4d3128"/>
      <ellipse cx="15.300" cy="22.800" rx="1.300" ry="2" fill="#5a3a2e"/>
      <path d="M15.800 19.600h15.200l-.5 2.200c-2 .8-4.500.8-6.500-.3-2.500 1.100-5.500 1.100-7.700.1z" fill="#17120f"/>
      <path d="M16 19.700h15" stroke="#a07a3c" stroke-width=".6"/>
      <ellipse cx="25.800" cy="25.900" rx="1.500" ry=".8" fill="#9a4a58"/>
      <!-- hat -->
      <ellipse cx="21.600" cy="17.600" rx="12.300" ry="2.300" fill="#947a52" transform="rotate(-4 21.600 17.600)"/>
      <path d="M13.200 16.800c.2-2.600 1.800-4.800 4.800-5.300 1.500.6 2.500-.5 4.500-.600 3.500.2 6.800 2.400 8.300 5.300-6 1.500-11.500 1.600-17.600.6z" fill="#ab9168"/>
      <path d="M14.800 13.200c1.800-1.600 3.600-2 5.400-1.600" stroke="#cdbb96" stroke-width="1" fill="none"/>
    </g></g>
  </svg>
  <div class="abs" style="left:1818.8px;top:71.700px;width:12.500px;height:12.500px;border-radius:50%;background:#28c76f"></div>
</div>

</div>
</body>
</html>
